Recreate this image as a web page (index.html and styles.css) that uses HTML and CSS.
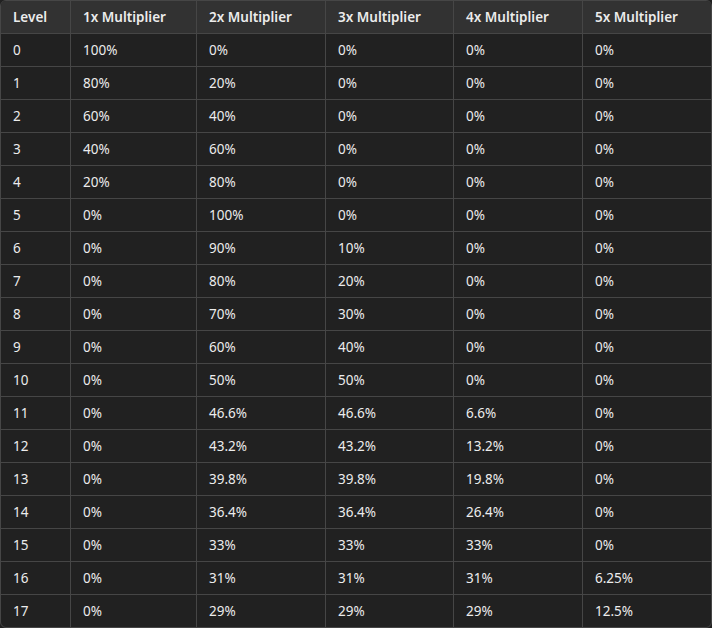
FILE: index.html
```html
<!DOCTYPE html>
<html>
<head>
<meta charset="utf-8">
<link rel="stylesheet" href="styles.css">
</head>
<body>
<div class="wrap">
<table class="grid">
<colgroup>
<col class="c-level"><col class="c-m1"><col class="c-m2"><col class="c-m3"><col class="c-m4"><col class="c-m5">
</colgroup>
<thead>
<tr><th>Level</th><th>1x Multiplier</th><th>2x Multiplier</th><th>3x Multiplier</th><th>4x Multiplier</th><th>5x Multiplier</th></tr>
</thead>
<tbody>
<tr><td>0</td><td>100%</td><td>0%</td><td>0%</td><td>0%</td><td>0%</td></tr>
<tr><td>1</td><td>80%</td><td>20%</td><td>0%</td><td>0%</td><td>0%</td></tr>
<tr><td>2</td><td>60%</td><td>40%</td><td>0%</td><td>0%</td><td>0%</td></tr>
<tr><td>3</td><td>40%</td><td>60%</td><td>0%</td><td>0%</td><td>0%</td></tr>
<tr><td>4</td><td>20%</td><td>80%</td><td>0%</td><td>0%</td><td>0%</td></tr>
<tr><td>5</td><td>0%</td><td>100%</td><td>0%</td><td>0%</td><td>0%</td></tr>
<tr><td>6</td><td>0%</td><td>90%</td><td>10%</td><td>0%</td><td>0%</td></tr>
<tr><td>7</td><td>0%</td><td>80%</td><td>20%</td><td>0%</td><td>0%</td></tr>
<tr><td>8</td><td>0%</td><td>70%</td><td>30%</td><td>0%</td><td>0%</td></tr>
<tr><td>9</td><td>0%</td><td>60%</td><td>40%</td><td>0%</td><td>0%</td></tr>
<tr><td>10</td><td>0%</td><td>50%</td><td>50%</td><td>0%</td><td>0%</td></tr>
<tr><td>11</td><td>0%</td><td>46.6%</td><td>46.6%</td><td>6.6%</td><td>0%</td></tr>
<tr><td>12</td><td>0%</td><td>43.2%</td><td>43.2%</td><td>13.2%</td><td>0%</td></tr>
<tr><td>13</td><td>0%</td><td>39.8%</td><td>39.8%</td><td>19.8%</td><td>0%</td></tr>
<tr><td>14</td><td>0%</td><td>36.4%</td><td>36.4%</td><td>26.4%</td><td>0%</td></tr>
<tr><td>15</td><td>0%</td><td>33%</td><td>33%</td><td>33%</td><td>0%</td></tr>
<tr><td>16</td><td>0%</td><td>31%</td><td>31%</td><td>31%</td><td>6.25%</td></tr>
<tr><td>17</td><td>0%</td><td>29%</td><td>29%</td><td>29%</td><td>12.5%</td></tr>
</tbody>
</table>
</div>
</body>
</html>
```
FILE: styles.css
```css
html, body {
  margin: 0;
  padding: 0;
  background: #212121;
}
.wrap {
  width: 712px;
  height: 628px;
}
.grid {
  width: 712px;
  table-layout: fixed;
  border-collapse: separate;
  border-spacing: 0;
  border: 1px solid #464646;
  border-radius: 6px;
  overflow: hidden;
  font-family: "Noto Sans", "Open Sans", sans-serif;
  font-size: 13.5px;
  color: #ececec;
  background: #212121;
}
.c-level { width: 69px; }
.c-m1 { width: 126px; }
.c-m2 { width: 129px; }
.c-m3 { width: 128px; }
.c-m4 { width: 129px; }
.c-m5 { width: 129px; }
th, td {
  height: 32px;
  padding: 0 0 0 12px;
  text-align: left;
  vertical-align: middle;
  border-left: 1px solid #464646;
  border-top: 1px solid #464646;
  box-sizing: border-box;
  white-space: nowrap;
}
th:first-child, td:first-child {
  border-left: none;
}
thead th {
  border-top: none;
  background: #323232;
  font-weight: 600;
  height: 32px;
}
td {
  height: 33px;
}
```
